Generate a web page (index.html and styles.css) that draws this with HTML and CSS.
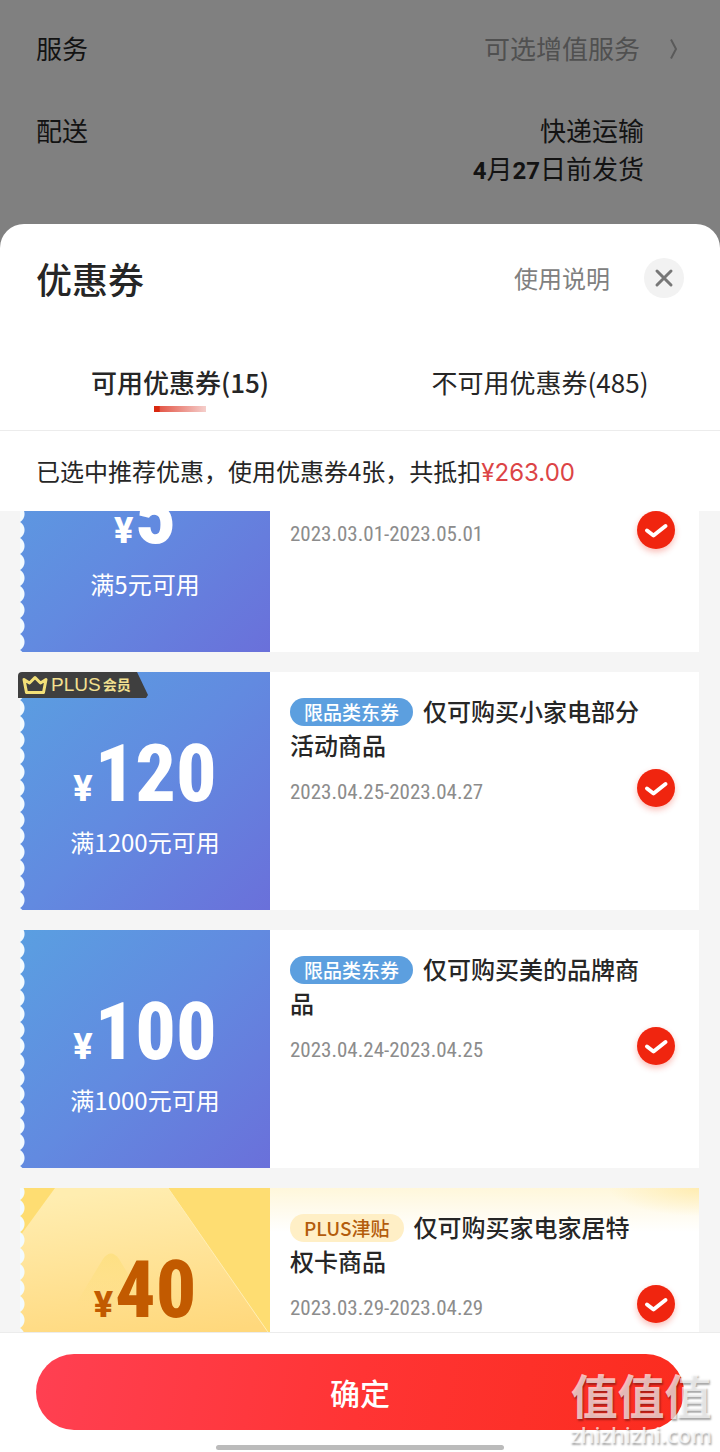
FILE: index.html
```html
<!DOCTYPE html>
<html lang="zh-CN">
<head>
  <meta charset="UTF-8" />
  <meta name="viewport" content="width=device-width, initial-scale=1.0" />
  <title>优惠券</title>
  <link rel="stylesheet" href="styles.css">
</head>
<body>
  <div class="product">
    <div class="product-row">
      <span>服务</span>
      <a class="service-link" href="#service">可选增值服务
        <svg class="arrow" viewBox="0 0 16 24"><path d="M3 3.500 8 13 3 22.500" /></svg>
      </a>
    </div>
    <div class="product-row">
      <span>配送</span>
      <div class="delivery">快递运输<br><b>4</b>月<b>27</b>日前发货</div>
    </div>
  </div>

  <main class="sheet">
    <header class="sheet-header">
      <h1>优惠券</h1>
      <a class="help" href="#help">使用说明</a>
      <button class="close" aria-label="关闭">
        <svg viewBox="0 0 40 40"><path d="M13 13 27 27M27 13 13 27" /></svg>
      </button>
    </header>

    <nav class="tabs">
      <button class="tab active">可用优惠券(15)</button>
      <button class="tab">不可用优惠券(485)</button>
    </nav>

    <p class="summary">已选中推荐优惠，使用优惠券4张，共抵扣<span class="price">¥263.00</span></p>

    <div class="coupon-list">
      <section class="coupon first">
        <div class="coupon-value">
          <p class="amount"><span class="yen">¥</span>5</p>
          <p class="limit">满5元可用</p>
        </div>
        <div class="coupon-detail">
          <div class="coupon-title"></div>
          <div class="coupon-foot">
            <span class="date">2023.03.01-2023.05.01</span>
            <label class="check">
              <input type="checkbox" aria-label="选择满5元可用优惠券" checked>
              <svg viewBox="0 0 38 38"><path d="M10 19.500 16.500 24.500 28.500 15" /></svg>
            </label>
          </div>
        </div>
      </section>

      <section class="coupon">
        <div class="plus-badge">
          <svg class="crown" viewBox="0 0 26 20"><path d="M2 4.500 7.500 8 13 2.500 18.500 8 24 4.500 21.500 17.500H4.500Z" /></svg>
          <span>PLUS</span><span class="member">会员</span>
        </div>
        <div class="coupon-value">
          <p class="amount"><span class="yen">¥</span>120</p>
          <p class="limit">满1200元可用</p>
        </div>
        <div class="coupon-detail">
          <div class="coupon-title"><span class="tag">限品类东券</span>仅可购买小家电部分活动商品</div>
          <div class="coupon-foot">
            <span class="date">2023.04.25-2023.04.27</span>
            <label class="check">
              <input type="checkbox" aria-label="选择满1200元可用优惠券" checked>
              <svg viewBox="0 0 38 38"><path d="M10 19.500 16.500 24.500 28.500 15" /></svg>
            </label>
          </div>
        </div>
      </section>

      <section class="coupon">
        <div class="coupon-value">
          <p class="amount"><span class="yen">¥</span>100</p>
          <p class="limit">满1000元可用</p>
        </div>
        <div class="coupon-detail">
          <div class="coupon-title"><span class="tag">限品类东券</span>仅可购买美的品牌商品</div>
          <div class="coupon-foot">
            <span class="date">2023.04.24-2023.04.25</span>
            <label class="check">
              <input type="checkbox" aria-label="选择满1000元可用优惠券" checked>
              <svg viewBox="0 0 38 38"><path d="M10 19.500 16.500 24.500 28.500 15" /></svg>
            </label>
          </div>
        </div>
      </section>

      <section class="coupon gold">
        <div class="coupon-value">
          <svg class="rays" viewBox="0 0 250 238" preserveAspectRatio="none">
            <defs>
              <linearGradient id="ray" x1="0.4" y1="0" x2="0.5" y2="0.65">
                <stop offset="0" stop-color="#ffedb0" />
                <stop offset="1" stop-color="#ffd87c" />
              </linearGradient>
              <linearGradient id="peak" x1="0" y1="0" x2="0" y2="1">
                <stop offset="0" stop-color="#fddf7e" stop-opacity="0.8" />
                <stop offset="0.7" stop-color="#fddf7e" stop-opacity="0" />
              </linearGradient>
            </defs>
            <path d="M35 0H148L250 147V238H0V48Z" fill="url(#ray)" />
            <path d="M148 0 250 147" stroke="#ffeeb4" />
            <path d="M40 142 83 71Q91 60 99 71L142 142Z" fill="url(#peak)" />
          </svg>
          <p class="amount"><span class="yen">¥</span>40</p>
        </div>
        <div class="coupon-detail">
          <div class="coupon-title"><span class="tag">PLUS津贴</span>仅可购买家电家居特权卡商品</div>
          <div class="coupon-foot">
            <span class="date">2023.03.29-2023.04.29</span>
            <label class="check">
              <input type="checkbox" aria-label="选择PLUS津贴优惠券" checked>
              <svg viewBox="0 0 38 38"><path d="M10 19.500 16.500 24.500 28.500 15" /></svg>
            </label>
          </div>
        </div>
      </section>
    </div>

    <footer class="sheet-footer">
      <button class="confirm">确定</button>
      <div class="home-bar"></div>
    </footer>
  </main>

  <div class="watermark">
    <div class="watermark-name">值值值</div>
    <div class="watermark-site">zhizhizhi.com</div>
  </div>
</body>
</html>
```
FILE: styles.css
```css
* {
  box-sizing: border-box;
}
body {
  font-family: "Noto Sans CJK SC", sans-serif;
  font-size: 24px;
  color: #262626;
  background: #808080;
  margin: 0;
  height: 100vh;
  display: flex;
  flex-direction: column;
  position: relative;
}
h1, p {
  margin: 0;
}
a {
  color: inherit;
  text-decoration: none;
}
button {
  font-family: inherit;
  color: inherit;
  background: none;
  border: none;
  padding: 0;
  cursor: pointer;
}

/* dimmed page behind the sheet */
.product {
  display: flex;
  flex-direction: column;
  gap: 44px;
  padding: 29px 36px 37px;
  font-size: 26px;
  line-height: 38px;
  color: #131313;
}
.product-row {
  display: flex;
  justify-content: space-between;
}
.service-link {
  display: flex;
  align-items: center;
  color: #505050;
}
.arrow {
  width: 16px;
  height: 24px;
  margin-left: 28px;
  fill: none;
  stroke: #5a5a5a;
  stroke-width: 2;
}
.delivery {
  text-align: right;
  padding-right: 40px;
}
.delivery b {
  font-family: Roboto, sans-serif;
  font-size: 24px;
  line-height: 24px;
}

.sheet {
  flex: 1;
  min-height: 0;
  display: flex;
  flex-direction: column;
  background: #fff;
  border-radius: 24px 24px 0 0;
}
.sheet-header {
  display: flex;
  align-items: center;
  padding: 34px 36px 0;
}
h1 {
  flex: 1;
  font-size: 36px;
  font-weight: 500;
  line-height: 40px;
}
.help {
  line-height: 40px;
  color: #808080;
  margin-right: 34px;
}
.close {
  width: 40px;
  height: 40px;
  border-radius: 50%;
  background: #f2f2f2;
}
.close svg {
  display: block;
  fill: none;
  stroke: #777;
  stroke-width: 3;
  stroke-linecap: round;
}

.tabs {
  display: flex;
  padding-top: 64px;
  border-bottom: 1px solid #ececec;
}
.tab {
  flex: 1;
  font-size: 26px;
  line-height: 40px;
  padding-bottom: 28px;
}
.tab.active {
  font-weight: 500;
  padding-bottom: 18px;
}
.tab.active::after {
  content: "";
  display: block;
  width: 52px;
  height: 6px;
  margin: 4px auto 0;
  background: linear-gradient(90deg, #d9280f 10%, #e4594a 12%, #f5cfcc);
}
.summary {
  padding: 22px 36px;
  line-height: 36px;
}
.price {
  font-family: Inter, sans-serif;
  line-height: 24px;
  color: #dc4446;
}

.coupon-list {
  flex: 1;
  min-height: 0;
  overflow: hidden;
  display: flex;
  flex-direction: column;
  gap: 20px;
  padding: 0 21px 0 20px;
  background: #f5f5f5;
}
.coupon {
  position: relative;
  flex: none;
  display: flex;
  height: 238px;
  background: #fff;
}
/* list is scrolled part of the way down */
.coupon.first {
  margin-top: -97px;
}
.coupon-value {
  position: relative;
  width: 250px;
  padding-top: 62px;
  text-align: center;
  color: #fff;
  background: linear-gradient(135deg, #5a9fe1, #628ae0 50%, #6a70da);
}
/* perforated left edge */
.coupon-value::before {
  content: "";
  position: absolute;
  z-index: 1;
  left: 0;
  top: 0;
  bottom: 0;
  width: 5px;
  background: radial-gradient(circle at -5px 8px, #f3fbff 9px, transparent 10px) 0 -4px / 5px 16px repeat-y;
}
.amount {
  position: relative;
  font-family: "Roboto Condensed", Roboto, sans-serif;
  font-size: 80px;
  font-weight: 800;
  line-height: 80px;
}
.yen {
  font-family: Roboto, sans-serif;
  font-size: 36px;
  line-height: 36px;
  margin-right: 2px;
}
.limit {
  line-height: 36px;
  margin-top: 10px;
}
.coupon-detail {
  flex: 1;
  padding: 22px 24px 0 20px;
}
.coupon-title {
  min-height: 68px;
  padding-right: 24px;
  font-weight: 500;
  line-height: 34px;
}
.tag {
  display: inline-block;
  vertical-align: top;
  margin: 4px 10px 0 0;
  padding: 0 14px;
  border-radius: 14px;
  font-size: 19px;
  line-height: 28px;
  color: #fff;
  background: #5c9fdf;
}
.coupon-foot {
  display: flex;
  justify-content: space-between;
  align-items: flex-end;
  margin-top: 7px;
}
.date {
  font-family: "Roboto Condensed", Roboto, sans-serif;
  font-size: 21px;
  line-height: 30px;
  color: #8c8c8c;
}
.check {
  position: relative;
  width: 38px;
  height: 38px;
  border-radius: 50%;
  background: #f0250f;
  box-shadow: 0 3px 6px rgba(240, 37, 15, 0.3);
}
.check input {
  position: absolute;
  inset: 0;
  margin: 0;
  opacity: 0;
}
.check svg {
  display: block;
  fill: none;
  stroke: #fff;
  stroke-width: 4;
  stroke-linecap: round;
  stroke-linejoin: round;
}
.check input:not(:checked) + svg {
  visibility: hidden;
}

.plus-badge {
  position: absolute;
  z-index: 2;
  left: -2px;
  top: 0;
  width: 130px;
  height: 26px;
  display: flex;
  align-items: center;
  padding-left: 4px;
  border-radius: 4px 0 0 0;
  font-family: "Liberation Sans", "Noto Sans CJK SC", sans-serif;
  font-size: 19px;
  line-height: 26px;
  color: #f3e090;
  background: #3f3f3f;
  clip-path: polygon(0 0, 119px 0, 130px 23px, 128px 26px, 0 26px);
}
.crown {
  width: 26px;
  height: 20px;
  margin-right: 3px;
  fill: none;
  stroke: #f3e078;
  stroke-width: 3;
  stroke-linejoin: round;
}
.member {
  margin-left: 2px;
  font-size: 14px;
  font-weight: 700;
}

.gold .coupon-value {
  color: #c25a00;
  background: #fedd72;
}
.gold .rays {
  position: absolute;
  left: 0;
  top: 0;
  width: 100%;
  height: 100%;
}
.gold .coupon-detail {
  background: radial-gradient(90px 28px at 100% 0, rgba(255, 232, 160, 0.7), transparent), linear-gradient(#fff7db, #fff 44px);
}
.gold .tag {
  color: #b35c0c;
  background: #ffefc6;
}

.sheet-footer {
  display: flex;
  flex-direction: column;
  align-items: center;
  padding: 21px 36px 2px;
  border-top: 1px solid #ececec;
  background: #fff;
}
.confirm {
  width: 100%;
  height: 76px;
  border-radius: 38px;
  font-size: 30px;
  font-weight: 500;
  color: #fff;
  background: linear-gradient(100deg, #ff4052, #ff3434 50%, #fb2c1e);
}
.home-bar {
  width: 288px;
  height: 5px;
  margin-top: 15px;
  border-radius: 3px;
  background: #bbb;
}

.watermark {
  position: absolute;
  right: 8px;
  bottom: 4px;
  text-align: center;
  color: rgba(255, 255, 255, 0.7);
  text-shadow: 1px 2px 2px rgba(0, 0, 0, 0.35);
}
.watermark-name {
  font-size: 47px;
  font-weight: 700;
  line-height: 52px;
}
.watermark-site {
  font-family: "Noto Sans", sans-serif;
  font-size: 22px;
  font-weight: 500;
  line-height: 28px;
}
```
